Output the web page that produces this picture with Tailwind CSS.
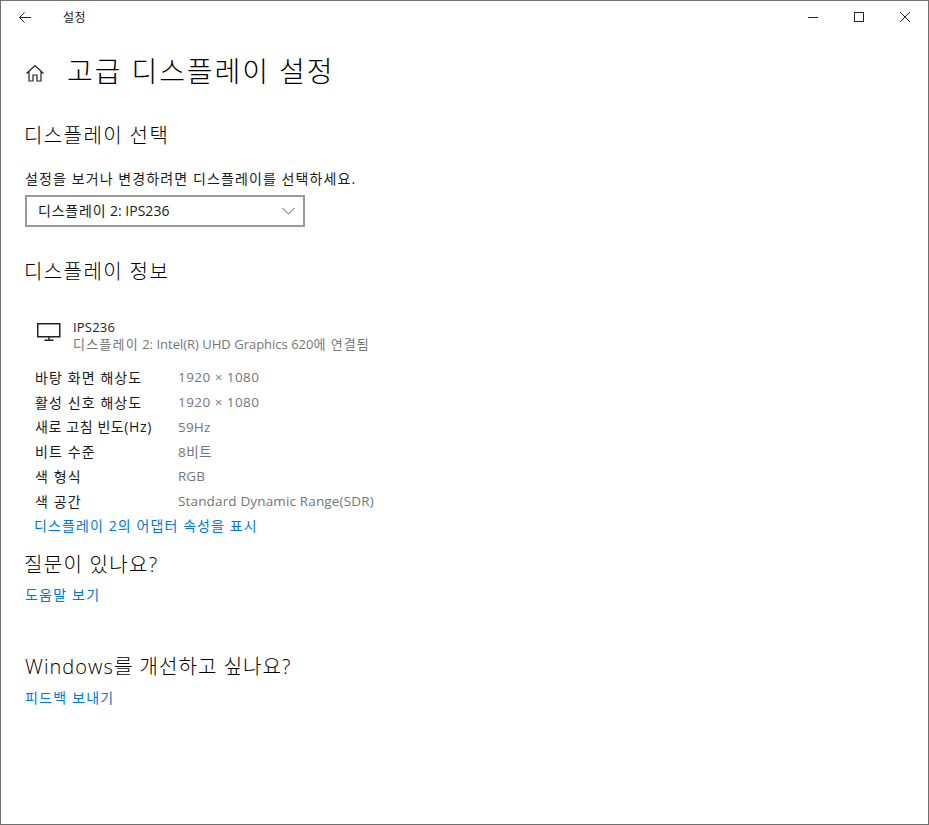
<!DOCTYPE html>
<html lang="ko">
<head>
  <meta charset="UTF-8">
  <title>설정</title>
  <script src="https://cdn.jsdelivr.net/npm/@tailwindcss/browser@4"></script>
</head>
<body class="bg-white font-['Open_Sans','Noto_Sans_CJK_KR',sans-serif] text-[#1a1a1a]">
  <div class="h-[825px] w-[929px] overflow-hidden border border-[#707070] flex flex-col">
    <!-- title bar -->
    <div class="h-[31px] flex items-center shrink-0">
      <svg class="ml-[18px] w-[12px] h-[11px] mt-[2px]" viewBox="0 0 12 11" fill="none" stroke="#222" stroke-width="1"><path d="M.5 5.5H12M5.5 .5L.5 5.5L5.5 10.5"/></svg>
      <span class="ml-[32px] mt-[2px] text-xs tracking-[0.5px]">설정</span>
      <div class="ml-auto flex items-center">
        <svg class="w-[10px] h-[10px] mr-[36px] mt-[1px]" viewBox="0 0 10 10" stroke="#222" fill="none"><path d="M0 5.5H10"/></svg>
        <svg class="w-[10px] h-[10px] mr-[36px] mt-[1px]" viewBox="0 0 10 10" stroke="#222" fill="none"><rect x=".5" y=".5" width="9" height="9"/></svg>
        <svg class="w-[10px] h-[10px] mr-[18px] mt-[1px]" viewBox="0 0 10 10" stroke="#222" fill="none"><path d="M0 0L10 10M10 0L0 10"/></svg>
      </div>
    </div>

    <main class="pl-[24px] flex flex-col items-start">
      <div class="flex items-center mt-[15px] h-[48px]">
        <svg class="w-[18px] h-[18px] ml-[1px] mt-[3px]" viewBox="0 0 18 18" fill="none" stroke="#222" stroke-width="1.2"><path d="M.5 9.5L9 1.5L17.5 9.5M3 7.5V17H7V11H11V17H15V7.5"/></svg>
        <h1 class="ml-[23px] text-[28px] leading-[40px] tracking-[1.9px] font-light text-black">고급 디스플레이 설정</h1>
      </div>

      <h2 class="mt-[27px] -ml-[1px] text-[20px] leading-[28px] tracking-[1.4px] font-light text-black">디스플레이 선택</h2>
      <p class="mt-[19px] text-sm leading-[20px] tracking-[1.1px]">설정을 보거나 변경하려면 디스플레이를 선택하세요.</p>
      <div class="mt-[6px] w-[280px] h-[32px] border-2 border-[#999999] flex items-center justify-between pl-[11px] pr-[8px]">
        <span class="text-sm"><span class="tracking-[0.8px]">디스플레이</span> 2: IPS236</span>
        <svg class="w-[13px] h-[8px]" viewBox="0 0 13 8" fill="none" stroke="#555"><path d="M.5 1L6.5 7L12.5 1"/></svg>
      </div>

      <h2 class="mt-[31px] -ml-[1px] text-[20px] leading-[28px] tracking-[1.4px] font-light text-black">디스플레이 정보</h2>

      <div class="mt-[32px] ml-[12px] flex">
        <svg class="w-[24px] h-[20px] mt-[4px]" viewBox="0 0 24 20" fill="none" stroke="#222" stroke-width="1.5"><rect x=".75" y="1.75" width="22" height="13"/><path d="M12 15V18M7.5 18.25H16.5"/></svg>
        <div class="ml-[12px]">
          <div class="text-[13px] leading-[18px] text-[#222] tracking-[0.2px]">IPS236</div>
          <div class="text-[13px] leading-[17px] text-[#767676]"><span class="tracking-[1.2px]">디스플레이</span> 2: Intel(R) UHD Graphics 620<span class="tracking-[1px]">에 연결됨</span></div>
        </div>
      </div>

      <dl class="mt-[12px] ml-[10px] grid grid-cols-[143px_auto] auto-rows-[24.8px] items-center text-[14px]">
        <dt class="tracking-[1.1px]">바탕 화면 해상도</dt><dd class="text-[#767676] text-[13.5px] tracking-[0.45px]">1920 × 1080</dd>
        <dt class="tracking-[1.1px]">활성 신호 해상도</dt><dd class="text-[#767676] text-[13.5px] tracking-[0.45px]">1920 × 1080</dd>
        <dt class="tracking-[0.6px]">새로 고침 빈도(Hz)</dt><dd class="text-[#767676] text-[13.5px] tracking-[0.2px]">59Hz</dd>
        <dt class="tracking-[1.1px]">비트 수준</dt><dd class="text-[#767676] text-[13.5px] tracking-[0.5px]">8비트</dd>
        <dt class="tracking-[1.1px]">색 형식</dt><dd class="text-[#767676] text-[13.5px]">RGB</dd>
        <dt class="tracking-[1.1px]">색 공간</dt><dd class="text-[#767676] text-[13.5px] tracking-[0.15px]">Standard Dynamic Range(SDR)</dd>
      </dl>
      <a class="ml-[9px] -mt-[1px] text-sm leading-[25px] text-[#0078d7] tracking-[1.1px]">디스플레이 2의 어댑터 속성을 표시</a>

      <h2 class="mt-[13px] -ml-[1px] text-[20px] leading-[28px] tracking-[1.3px] font-light text-black">질문이 있나요?</h2>
      <a class="mt-[6px] text-sm leading-[20px] text-[#0078d7] tracking-[1.2px]">도움말 보기</a>

      <h2 class="mt-[48px] text-[20px] leading-[28px] tracking-[1.05px] font-light text-black">Windows를 개선하고 싶나요?</h2>
      <a class="mt-[7px] text-sm leading-[20px] text-[#0078d7] tracking-[1.2px]">피드백 보내기</a>
    </main>
  </div>
</body>
</html>
